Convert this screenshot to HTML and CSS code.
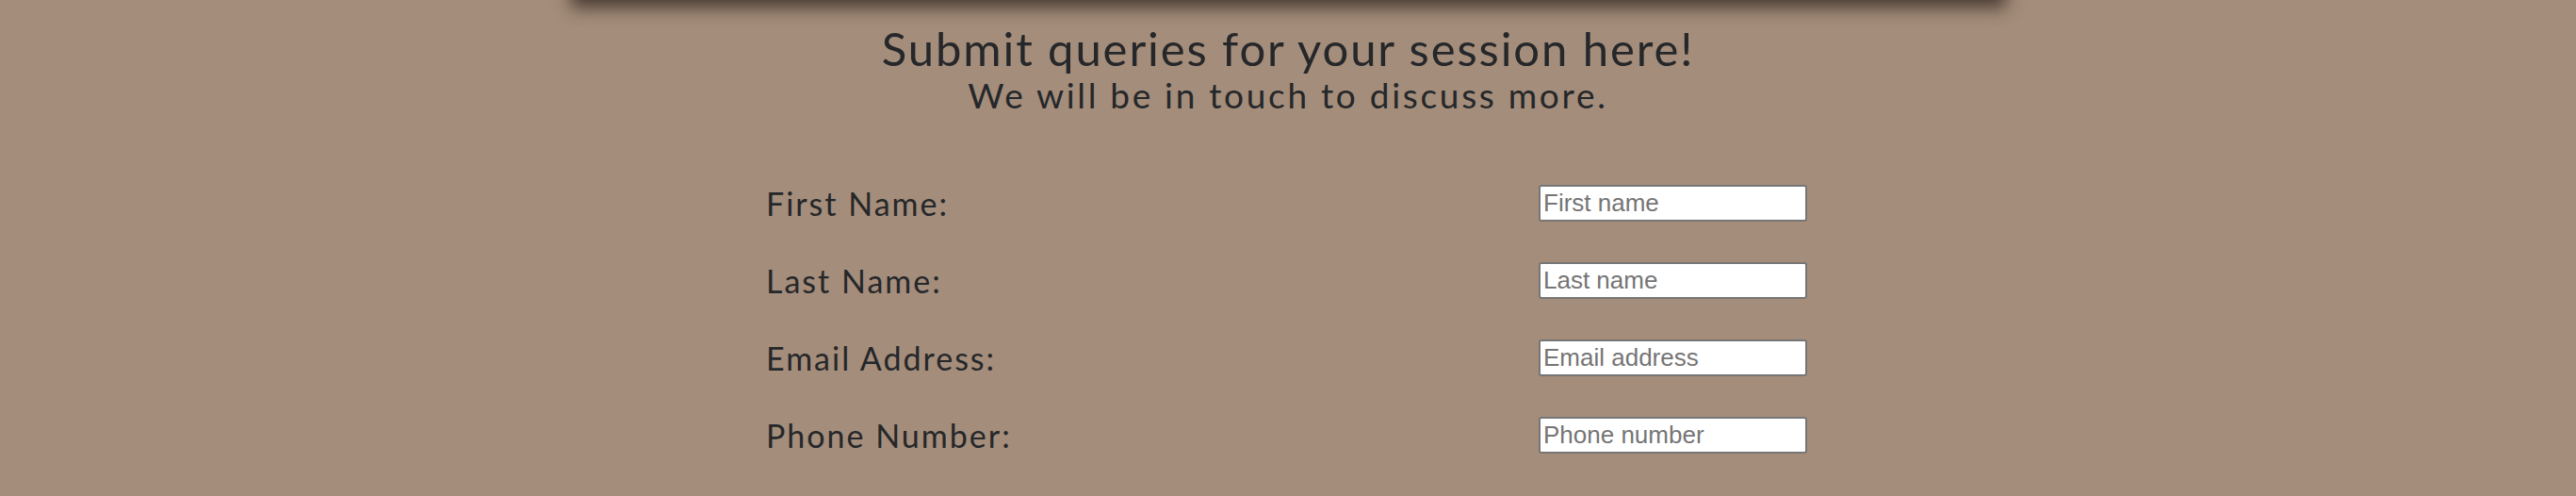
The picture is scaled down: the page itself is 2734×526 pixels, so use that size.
FILE: index.html
```html
<!DOCTYPE html>
<html lang="en">
<head>
<meta charset="utf-8">
<title>Submit queries</title>
<link rel="stylesheet" href="styles.css">
</head>
<body>
<div class="topbar"></div>
<main class="page">
  <header class="intro">
    <h1 class="title">Submit queries for your session here!</h1>
    <p class="subtitle">We will be in touch to discuss more.</p>
  </header>
  <form class="query-form">
    <div class="row">
      <label class="label" for="fname">First Name:</label>
      <input class="field" id="fname" type="text" placeholder="First name">
    </div>
    <div class="row">
      <label class="label" for="lname">Last Name:</label>
      <input class="field" id="lname" type="text" placeholder="Last name">
    </div>
    <div class="row">
      <label class="label" for="email">Email Address:</label>
      <input class="field" id="email" type="email" placeholder="Email address">
    </div>
    <div class="row">
      <label class="label" for="phone">Phone Number:</label>
      <input class="field" id="phone" type="tel" placeholder="Phone number">
    </div>
  </form>
</main>
</body>
</html>
```
FILE: styles.css
```css
html, body {
  margin: 0;
  padding: 0;
}
body {
  background: #a48d7a;
  color: #25272a;
  font-family: Lato, "Noto Sans", sans-serif;
  overflow: hidden;
}
.topbar {
  width: 1515px;
  height: 20px;
  margin: -20px auto 0;
  background: #5a4d44;
  box-shadow: 0 4px 18px 4px rgba(40, 30, 25, 0.75);
}
.page {
  display: flex;
  flex-direction: column;
  align-items: center;
}
.intro {
  text-align: center;
  padding-top: 23px;
}
.title {
  margin: 0;
  font-size: 49px;
  font-weight: 400;
  line-height: 56px;
  letter-spacing: 1.9px;
}
.subtitle {
  margin: 0;
  font-size: 37px;
  line-height: 44px;
  letter-spacing: 2.7px;
}
.query-form {
  width: 1105px;
  padding-right: 3px;
  margin-top: 73px;
  display: flex;
  flex-direction: column;
  gap: 43px;
}
.row {
  display: flex;
  justify-content: space-between;
  align-items: center;
  height: 39px;
}
.label {
  font-size: 34px;
  letter-spacing: 2px;
}
.field {
  box-sizing: border-box;
  width: 285px;
  height: 39px;
  border: 2px solid #767676;
  border-radius: 3px;
  padding: 0 3px;
  background: #fff;
  font-family: "Liberation Sans", Arial, sans-serif;
  font-size: 26px;
  color: #222;
}
.field::placeholder {
  color: #757575;
  opacity: 1;
}
```
